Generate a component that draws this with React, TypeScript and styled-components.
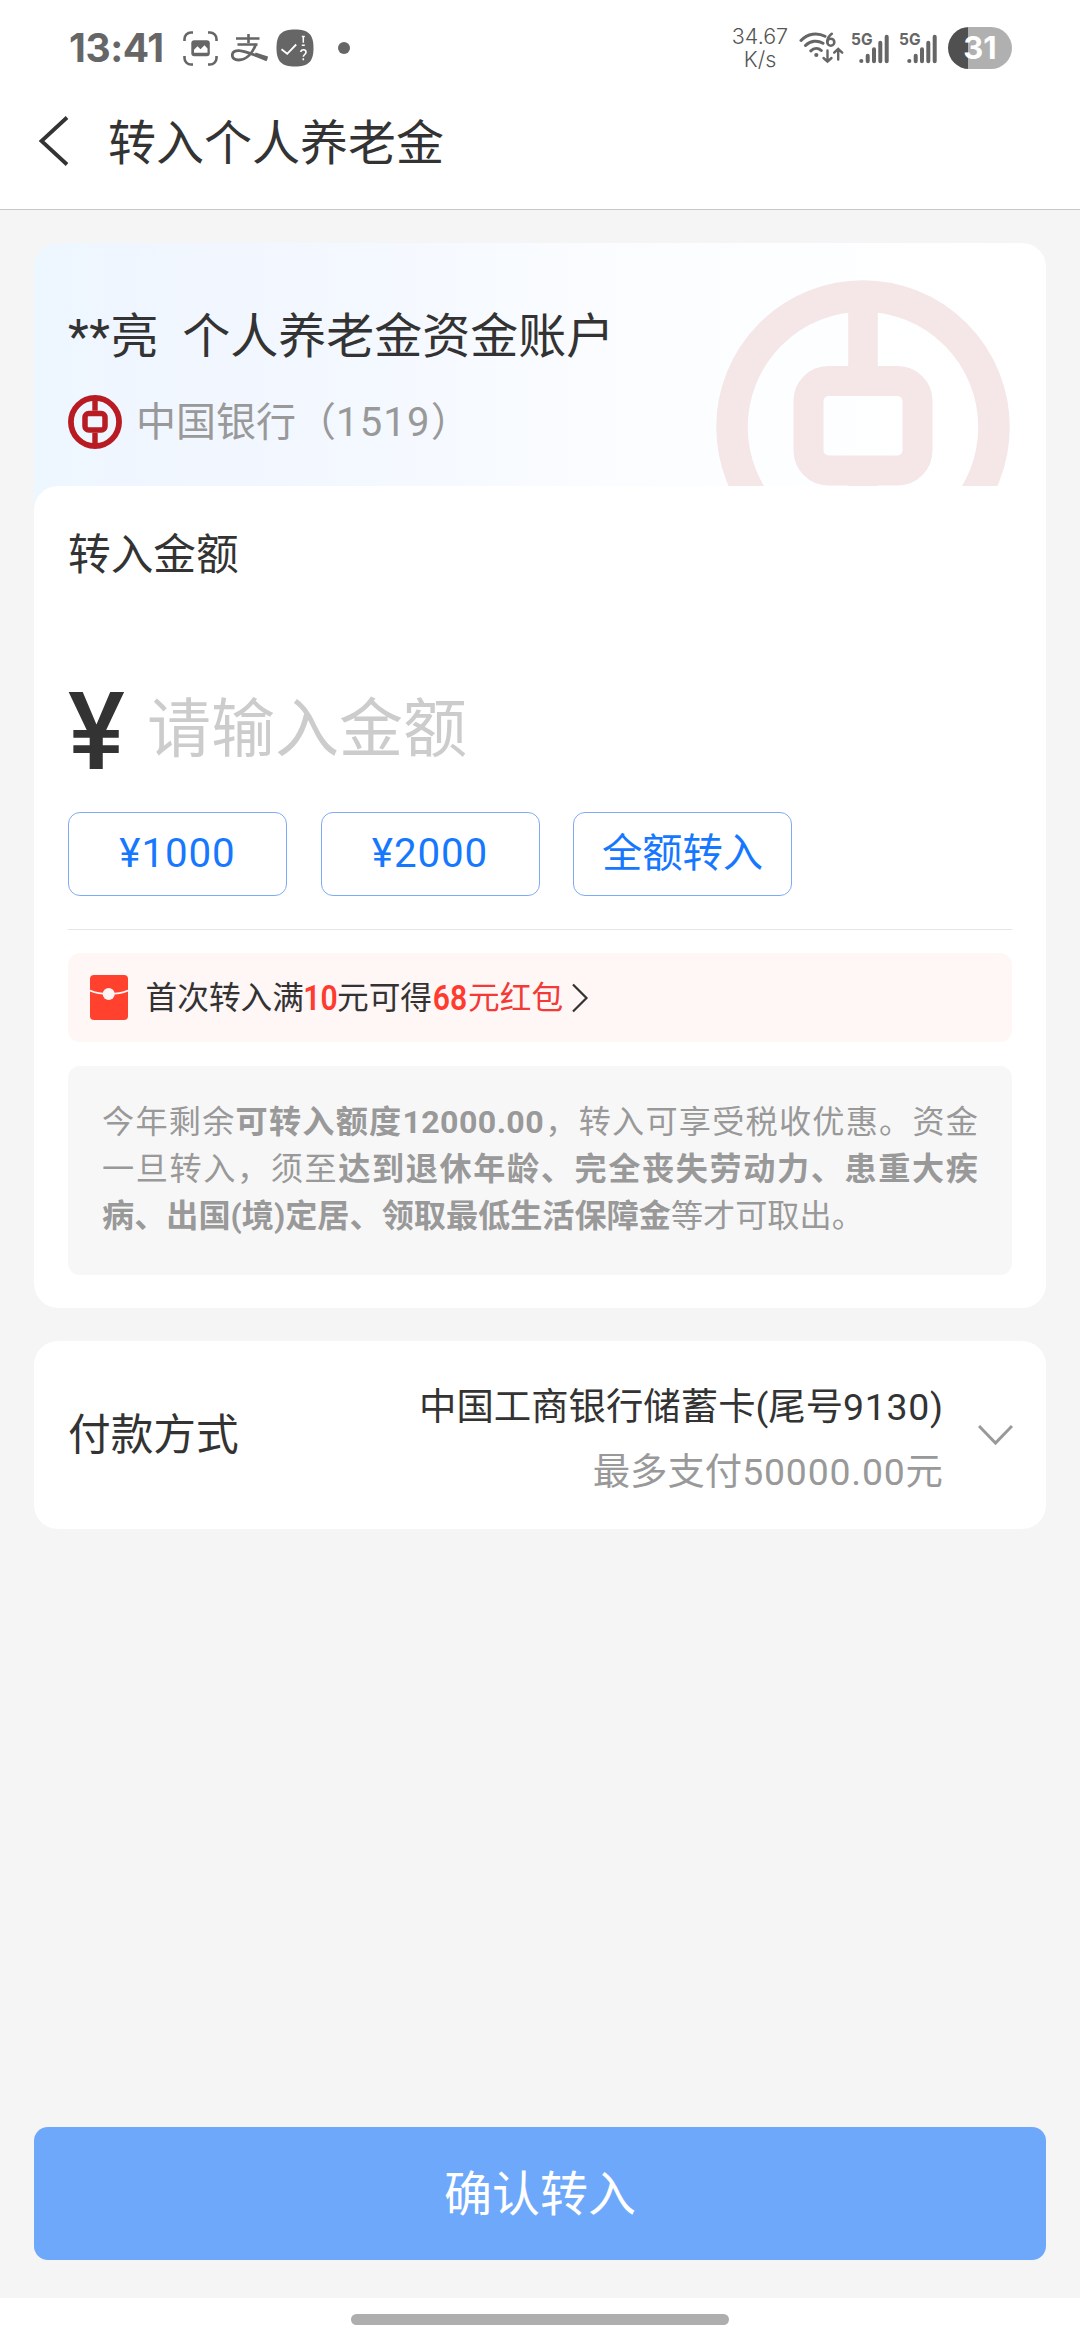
import React from "react";
import styled, { createGlobalStyle } from "styled-components";

const GlobalStyle = createGlobalStyle`
  * { box-sizing: border-box; }
  body {
    margin: 0;
    background: #f5f5f5;
    font-family: Roboto, "Noto Sans CJK SC", sans-serif;
    color: #333;
  }
  button { font-family: inherit; }
`;

const Screen = styled.div`
  width: 1080px;
  height: 2340px;
  display: flex;
  flex-direction: column;
  background: #f5f5f5;
  overflow: hidden;
`;

/* ---------- status bar ---------- */

const StatusBar = styled.div`
  height: 96px;
  flex: none;
  display: flex;
  justify-content: space-between;
  align-items: center;
  padding: 0 68px 0 69px;
  background: #fff;
  color: #666;
  font-family: Inter, sans-serif;
`;

const StatusGroup = styled.div`
  display: flex;
  align-items: center;
`;

const Clock = styled.div`
  width: 114px;
  font-size: 39px;
  line-height: 48px;
  font-weight: 700;
  letter-spacing: -0.4px;
`;

const NetSpeed = styled.div`
  width: 60px;
  text-align: center;
  font-size: 21.5px;
  line-height: 23px;
  font-weight: 300;
  color: #555;
`;

const StatusIcon = styled.svg<{ $gap?: number }>`
  display: block;
  flex: none;
  margin-left: ${(p) => p.$gap ?? 0}px;
`;

const Battery = styled.div`
  width: 64px;
  height: 42px;
  margin-left: 10px;
  border-radius: 21px;
  background: linear-gradient(to right, #505050 20px, #b0b0b0 20px);
  color: #fff;
  font-size: 31px;
  line-height: 42px;
  font-weight: 700;
  text-align: center;
`;

/* ---------- navigation ---------- */

const NavBar = styled.header`
  height: 114px;
  flex: none;
  display: flex;
  align-items: center;
  padding: 0 38px 23px;
  background: #fff;
  border-bottom: 1px solid #c8c8c8;
`;

const NavTitle = styled.h1`
  margin: 5px 0 0 38px;
  font-size: 48px;
  line-height: 60px;
  font-weight: 400;
`;

/* ---------- cards ---------- */

const Content = styled.main`
  flex: 1;
  display: flex;
  flex-direction: column;
  padding: 33px 34px 0;
`;

const AccountCard = styled.section`
  border-radius: 24px;
  overflow: hidden;
  background: linear-gradient(
    to right,
    #edf7ff 0,
    #f0f6ff 90px,
    #f4f8ff 340px,
    #fafcff 560px,
    #fdfeff 760px,
    #fff 1000px
  );
`;

const AccountHeader = styled.div`
  height: 243px;
  display: flex;
  justify-content: space-between;
  padding: 0 36px 0 34px;
`;

const AccountInfo = styled.div`
  padding-top: 63.5px;
`;

const AccountName = styled.div`
  font-size: 48px;
  line-height: 60px;
  white-space: pre;
`;

const Mask = styled.span`
  letter-spacing: 0.6px;
`;

const BankLine = styled.div`
  margin-top: 27px;
  display: flex;
  align-items: center;
  gap: 14px;
  font-size: 40px;
  line-height: 54px;
  color: #999;
`;

const BankName = styled.span`
  padding-top: 2px;
`;

const Digits = styled.span<{ $spacing: number }>`
  letter-spacing: ${(p) => p.$spacing}px;
`;

const Watermark = styled.div`
  height: 243px;
  padding-top: 37px;
  overflow: hidden;
`;

const AmountPanel = styled.div`
  height: 822px;
  display: flex;
  flex-direction: column;
  border-radius: 24px;
  background: #fff;
  padding: 38.5px 34px 0;
`;

const Label = styled.div`
  font-size: 42.7px;
  line-height: 60px;
`;

const AmountRow = styled.div`
  height: 120px;
  margin-top: 85.5px;
  display: flex;
  align-items: center;
`;

const Currency = styled.span`
  width: 79px;
  padding-top: 5px;
  font-size: 107px;
  line-height: 120px;
  font-weight: 500;
`;

const Placeholder = styled.span`
  font-size: 64px;
  line-height: 90px;
  color: #ccc;
`;

const QuickRow = styled.div`
  margin-top: 22px;
  display: flex;
  gap: 33.5px;
`;

const QuickButton = styled.button`
  width: 219px;
  height: 84px;
  padding: 0;
  border: 1px solid #7fabf5;
  border-radius: 12px;
  background: #fff;
  color: #1677ff;
  font-size: 40.3px;
  line-height: 56px;
`;

const Divider = styled.div`
  height: 1px;
  flex: none;
  margin-top: 33px;
  background: #e5e5e5;
`;

const Promo = styled.div`
  height: 89px;
  flex: none;
  margin-top: 23px;
  display: flex;
  align-items: center;
  padding-left: 22px;
  border-radius: 12px;
  background: #fff6f6;
  font-size: 31.7px;
  line-height: 46px;
`;

const PromoText = styled.span`
  display: flex;
  align-items: center;
  padding-top: 3px;
  margin: 0 8px 0 17.5px;
`;

const Hot = styled.span`
  color: #f23a36;
`;

const HotNumber = styled.span<{ $width: number }>`
  width: ${(p) => p.$width}px;
  display: flex;
  justify-content: center;
  color: #ff3b30;
  font-size: 35px;
  font-weight: 600;
  transform: scaleX(0.86);
`;

const Notice = styled.p`
  height: 209px;
  flex: none;
  margin: 24px 0 0;
  padding: 32.5px 34px 0;
  border-radius: 12px;
  background: #f7f7f7;
  color: #999;
  font-size: 32.15px;
  line-height: 47px;
  text-align: justify;
  b { font-weight: 700; }
`;

const PaymentCard = styled.section`
  height: 188px;
  margin-top: 33px;
  display: flex;
  align-items: center;
  padding: 0 33px 0 34px;
  border-radius: 24px;
  background: #fff;
`;

const PaymentInfo = styled.div`
  margin: 8px 35px 0 auto;
  display: flex;
  flex-direction: column;
  gap: 9px;
  align-items: flex-end;
`;

const PaymentLine = styled.div<{ $muted?: boolean }>`
  font-size: 37.4px;
  line-height: 56px;
  color: ${(p) => (p.$muted ? "#999" : "#333")};
`;

const Footer = styled.footer`
  padding: 0 34px 38px;
`;

const ConfirmButton = styled.button`
  display: block;
  width: 100%;
  height: 133px;
  padding: 2px 0 0;
  border: 0;
  border-radius: 14px;
  background: #6ea8fb;
  color: #fff;
  font-size: 48px;
  line-height: 64px;
`;

const HomeArea = styled.div`
  height: 42px;
  flex: none;
  display: flex;
  justify-content: center;
  padding-top: 16px;
  background: #fff;
`;

const HomeBar = styled.div`
  width: 378px;
  height: 11px;
  border-radius: 6px;
  background: #aeaeae;
`;

/* ---------- icons ---------- */

const BankLogo = ({ size, color }: { size: number; color: string }) => (
  <svg width={size} height={size} viewBox="0 0 294 294" fill="none">
    <circle cx="147" cy="147" r="131" stroke={color} strokeWidth="31.5" />
    <path d="M132.2 20h29.6v66h-29.6zM132.2 205h29.6v70h-29.6z" fill={color} />
    <rect x="92.5" y="101" width="109" height="89.5" rx="20" stroke={color} strokeWidth="30" />
  </svg>
);

const CaptureIcon = () => (
  <StatusIcon width="35" height="35" viewBox="0 0 35 35" fill="none">
    <path
      d="M1.5 10V8a6.5 6.5 0 0 1 6.5-6.500h2M25 1.500h2A6.500 6.500 0 0 1 33.500 8v2M33.500 25v2a6.500 6.500 0 0 1-6.500 6.500h-2M10 33.500H8A6.500 6.500 0 0 1 1.500 27v-2"
      stroke="#666"
      strokeWidth="2.6"
    />
    <rect x="8.300" y="9.200" width="18.500" height="16" rx="3" fill="#666" />
    <path d="M11 21.800v-3l3.500-3.600 3 3 4-4 3 3.200v4.400z" fill="#fff" />
  </StatusIcon>
);

const AlipayIcon = () => (
  <StatusIcon $gap={13} width="37" height="30" viewBox="0 0 37 30" fill="none" stroke="#666">
    <path d="M17.500 1v9M5 5.500h23.500M6.500 11.500h20" strokeWidth="2.6" />
    <path d="M25 11C22 19 16 27 7.500 27 3.500 27 1.300 25 1.300 22c0-3 3-4.700 7-4.400C15 18 24 22 36 27" strokeWidth="2.800" />
    <path d="M24 21.200L36.500 25.300" strokeWidth="3.500" />
  </StatusIcon>
);

const TaskIcon = () => (
  <StatusIcon $gap={8} width="38" height="38" viewBox="0 0 38 38" fill="none">
    <path
      d="M19 .5C32.500 .5 37.500 5.500 37.500 19S32.500 37.500 19 37.500.5 32.500.5 19 5.500.5 19 .5z"
      fill="#666"
    />
    <path d="M5.500 20.200l5.700 4.600 9-9.300" stroke="#fff" strokeWidth="1.800" />
    <path d="M27.300 7.500v6.300M25.800 7.500h3M25.800 16.300h3" stroke="#fff" strokeWidth="1.500" />
    <path d="M24.800 23c.3-3 5.200-3 5.200.2 0 2.300-2.700 2.300-2.700 4.600M27.300 29.200v2" stroke="#fff" strokeWidth="1.600" />
  </StatusIcon>
);

const WifiIcon = () => (
  <StatusIcon $gap={9} width="46" height="34" viewBox="0 0 46 34" fill="none" stroke="#666" strokeLinecap="round">
    <path d="M2 9.500C8.500 2.300 18.500 1.300 26 5.300M6.500 14.500C11.500 9.500 18.500 9 24 12.300M11.800 19.800c3.200-3 7.500-3 10.500-.3" strokeWidth="3" />
    <circle cx="17.300" cy="24" r="2.100" fill="#666" stroke="none" />
    <circle cx="31.800" cy="11.200" r="3.500" strokeWidth="2.600" />
    <path d="M32.800 2.800c-2.300 1.700-4.500 4.500-4.500 8" strokeWidth="2.600" />
    <path d="M28.500 19.500v11M24.500 27l4 3.700 4-3.700M39.200 28.500V18.500M35.200 21.700l4-3.700 4 3.700" strokeWidth="2.400" />
  </StatusIcon>
);

const SignalIcon = ({ gap }: { gap: number }) => (
  <StatusIcon $gap={gap} width="40" height="46" viewBox="0 -6 40 46">
    <text x="1" y="14" fontSize="16.500" fontWeight="700" fill="#666" textLength="21.500" lengthAdjust="spacingAndGlyphs">
      5G
    </text>
    <circle cx="11.300" cy="30" r="2.100" fill="#666" />
    <path
      d="M17.700 24.800v5.500M24 18.200v12.100M30.300 11.700v18.600M36.700 5.800v24.500"
      stroke="#666"
      strokeWidth="4"
      strokeLinecap="round"
    />
  </StatusIcon>
);

const BackIcon = () => (
  <svg width="32" height="50" viewBox="0 0 32 50" fill="none">
    <path d="M29 1.500L3.500 25 29 48.500" stroke="#333" strokeWidth="3.800" />
  </svg>
);

const RedPacketIcon = () => (
  <svg width="38" height="45" viewBox="0 0 38 45">
    <rect width="38" height="45" rx="4" fill="#ff412e" />
    <path d="M0 15.500c10 4.500 28 4.500 38 0" stroke="#fff5f6" strokeWidth="1.800" fill="none" />
    <circle cx="18.700" cy="19" r="6" fill="#fff5f6" />
  </svg>
);

export default function App() {
  return (
    <Screen>
      <GlobalStyle />
      <StatusBar>
        <StatusGroup>
          <Clock>13:41</Clock>
          <CaptureIcon />
          <AlipayIcon />
          <TaskIcon />
          <StatusIcon $gap={24} width="12" height="12" viewBox="0 0 12 12">
            <circle cx="6" cy="6" r="6" fill="#666" />
          </StatusIcon>
        </StatusGroup>
        <StatusGroup>
          <NetSpeed>
            34.67
            <br />
            K/s
          </NetSpeed>
          <WifiIcon />
          <SignalIcon gap={5} />
          <SignalIcon gap={8} />
          <Battery>31</Battery>
        </StatusGroup>
      </StatusBar>

      <NavBar>
        <BackIcon />
        <NavTitle>转入个人养老金</NavTitle>
      </NavBar>

      <Content>
        <AccountCard>
          <AccountHeader>
            <AccountInfo>
              <AccountName>
                <Mask>**</Mask>
                {"亮  个人养老金资金账户"}
              </AccountName>
              <BankLine>
                <BankLogo size={54} color="#b81c22" />
                <BankName>
                  中国银行（<Digits $spacing={1.2}>1519</Digits>）
                </BankName>
              </BankLine>
            </AccountInfo>
            <Watermark>
              <BankLogo size={294} color="#f5e6e8" />
            </Watermark>
          </AccountHeader>

          <AmountPanel>
            <Label>转入金额</Label>
            <AmountRow>
              <Currency>¥</Currency>
              <Placeholder>请输入金额</Placeholder>
            </AmountRow>
            <QuickRow>
              <QuickButton>
                <Digits $spacing={0.9}>¥1000</Digits>
              </QuickButton>
              <QuickButton>
                <Digits $spacing={0.9}>¥2000</Digits>
              </QuickButton>
              <QuickButton>全额转入</QuickButton>
            </QuickRow>
            <Divider />
            <Promo>
              <RedPacketIcon />
              <PromoText>
                首次转入满<HotNumber $width={33}>10</HotNumber>元可得
                <HotNumber $width={36}>68</HotNumber>
                <Hot>元红包</Hot>
              </PromoText>
              <svg width="18" height="30" viewBox="0 0 18 30" fill="none">
                <path d="M2 1.500L15.500 15 2 28.500" stroke="#333" strokeWidth="2.200" />
              </svg>
            </Promo>
            <Notice>
              今年剩余<b>可转入额度<Digits $spacing={0.4}>12000.00</Digits></b>，转入可享受税收优惠。资金一旦转入，须至
              <b>达到退休年龄、完全丧失劳动力、患重大疾病、出国(境)定居、领取最低生活保障金</b>
              等才可取出。
            </Notice>
          </AmountPanel>
        </AccountCard>

        <PaymentCard>
          <Label>付款方式</Label>
          <PaymentInfo>
            <PaymentLine>
              中国工商银行储蓄卡(尾号<Digits $spacing={0.7}>9130</Digits>)
            </PaymentLine>
            <PaymentLine $muted>
              最多支付<Digits $spacing={0.8}>50000.00</Digits>元
            </PaymentLine>
          </PaymentInfo>
          <svg width="35" height="22" viewBox="0 0 35 22" fill="none">
            <path d="M1 2l16.500 17L34 2" stroke="#999" strokeWidth="3" />
          </svg>
        </PaymentCard>
      </Content>

      <Footer>
        <ConfirmButton>确认转入</ConfirmButton>
      </Footer>
      <HomeArea>
        <HomeBar />
      </HomeArea>
    </Screen>
  );
}
